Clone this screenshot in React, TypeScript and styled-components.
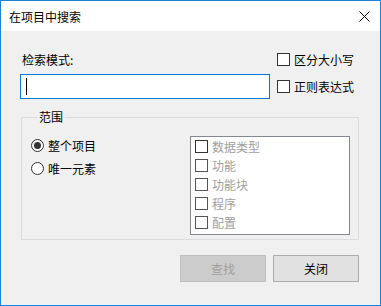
import React from "react";
import styled, { createGlobalStyle } from "styled-components";

const Global = createGlobalStyle`
  html, body { margin: 0; padding: 0; background: #ffffff; }
  body { font-family: "Noto Sans CJK SC", "Noto Sans", sans-serif; font-size: 12px; color: #000; }
  * { box-sizing: border-box; }
`;

const Window = styled.div`
  width: 381px;
  height: 306px;
  border: 1px solid #1883d7;
  display: flex;
  flex-direction: column;
  background: #f0f0f0;
`;

const TitleBar = styled.div`
  height: 30px;
  background: #ffffff;
  display: flex;
  align-items: center;
  justify-content: space-between;
  padding: 0 10px 0 8px;
  font-size: 12px;
`;

const Body = styled.div`
  flex: 1;
  display: flex;
  flex-direction: column;
  padding: 19px 21px 0 19px;
`;

const TopRow = styled.div`
  display: flex;
  align-items: flex-start;
`;

const LeftCol = styled.div`
  width: 250px;
  padding-top: 2px;
  display: flex;
  flex-direction: column;
`;

const Label = styled.div`
  height: 16px;
  line-height: 16px;
  padding-left: 2px;
  margin-bottom: 6px;
`;

const TextField = styled.div`
  height: 25px;
  background: #fff;
  border: 1px solid #0078d7;
  display: flex;
  align-items: center;
  padding-left: 5px;
`;

const Caret = styled.span`
  width: 1px;
  height: 17px;
  background: #000;
`;

const RightCol = styled.div`
  margin-left: 7px;
  display: flex;
  flex-direction: column;
  gap: 9px;
`;

const CheckRow = styled.label<{ $disabled?: boolean }>`
  display: flex;
  align-items: center;
  height: ${(p) => (p.$disabled ? "19px" : "18px")};
  gap: 4px;
  color: ${(p) => (p.$disabled ? "#a0a0a0" : "#000")};
`;

const Box = styled.span<{ $tone?: string }>`
  width: 13px;
  height: 13px;
  background: #fff;
  border: 1px solid ${(p) => p.$tone || "#333"};
  flex: none;
`;

const Group = styled.fieldset`
  margin: 10px 0 0 1px;
  width: 338px;
  padding: 0 8px 4px 9px;
  border: 1px solid #dcdcdc;
  display: flex;
  min-width: 0;
`;

const Legend = styled.legend`
  margin-left: 6px;
  padding: 0 2px;
  height: 16px;
  line-height: 16px;
`;

const GroupInner = styled.div`
  display: flex;
  width: 100%;
  padding-top: 11px;
`;

const RadioCol = styled.div`
  flex: 1;
  display: flex;
  flex-direction: column;
  gap: 5px;
`;

const RadioRow = styled.label`
  display: flex;
  align-items: center;
  height: 18px;
  gap: 4px;
`;

const Radio = styled.span<{ $on?: boolean }>`
  width: 13px;
  height: 13px;
  border-radius: 50%;
  border: 1px solid #333;
  background: #fff;
  display: flex;
  align-items: center;
  justify-content: center;
  &::after {
    content: "";
    width: 7px;
    height: 7px;
    border-radius: 50%;
    background: ${(p) => (p.$on ? "#333" : "transparent")};
  }
`;

const ListBox = styled.div`
  width: 160px;
  height: 99px;
  background: #fff;
  border: 1px solid #828790;
  padding: 0 0 0 4px;
  display: flex;
  flex-direction: column;
`;

const ButtonRow = styled.div`
  display: flex;
  justify-content: flex-end;
  gap: 7px;
  margin-top: 15px;
`;

const Button = styled.button<{ $disabled?: boolean }>`
  width: 86px;
  height: 27px;
  font-family: inherit;
  font-size: 12px;
  padding: 0;
  background: ${(p) => (p.$disabled ? "#cccccc" : "#e1e1e1")};
  border: 1px solid ${(p) => (p.$disabled ? "#bfbfbf" : "#adadad")};
  color: ${(p) => (p.$disabled ? "#a0a0a0" : "#000")};
`;

const items = ["数据类型", "功能", "功能块", "程序", "配置"];

export default function App() {
  return (
    <>
      <Global />
      <Window>
        <TitleBar>
          <span>在项目中搜索</span>
          <svg width="11" height="11" viewBox="0 0 11 11">
            <path d="M0.5 0.5 L10.5 10.5 M10.5 0.5 L0.5 10.5" stroke="#000" strokeWidth="1" />
          </svg>
        </TitleBar>
        <Body>
          <TopRow>
            <LeftCol>
              <Label>检索模式:</Label>
              <TextField>
                <Caret />
              </TextField>
            </LeftCol>
            <RightCol>
              <CheckRow>
                <Box />
                区分大小写
              </CheckRow>
              <CheckRow>
                <Box />
                正则表达式
              </CheckRow>
            </RightCol>
          </TopRow>
          <Group>
            <Legend>范围</Legend>
            <GroupInner>
              <RadioCol>
                <RadioRow>
                  <Radio $on />
                  整个项目
                </RadioRow>
                <RadioRow>
                  <Radio />
                  唯一元素
                </RadioRow>
              </RadioCol>
              <ListBox>
                {items.map((t, i) => (
                  <CheckRow key={t} $disabled>
                    <Box $tone={i === 0 ? "#333" : "#555"} />
                    {t}
                  </CheckRow>
                ))}
              </ListBox>
            </GroupInner>
          </Group>
          <ButtonRow>
            <Button $disabled>查找</Button>
            <Button>关闭</Button>
          </ButtonRow>
        </Body>
      </Window>
    </>
  );
}
